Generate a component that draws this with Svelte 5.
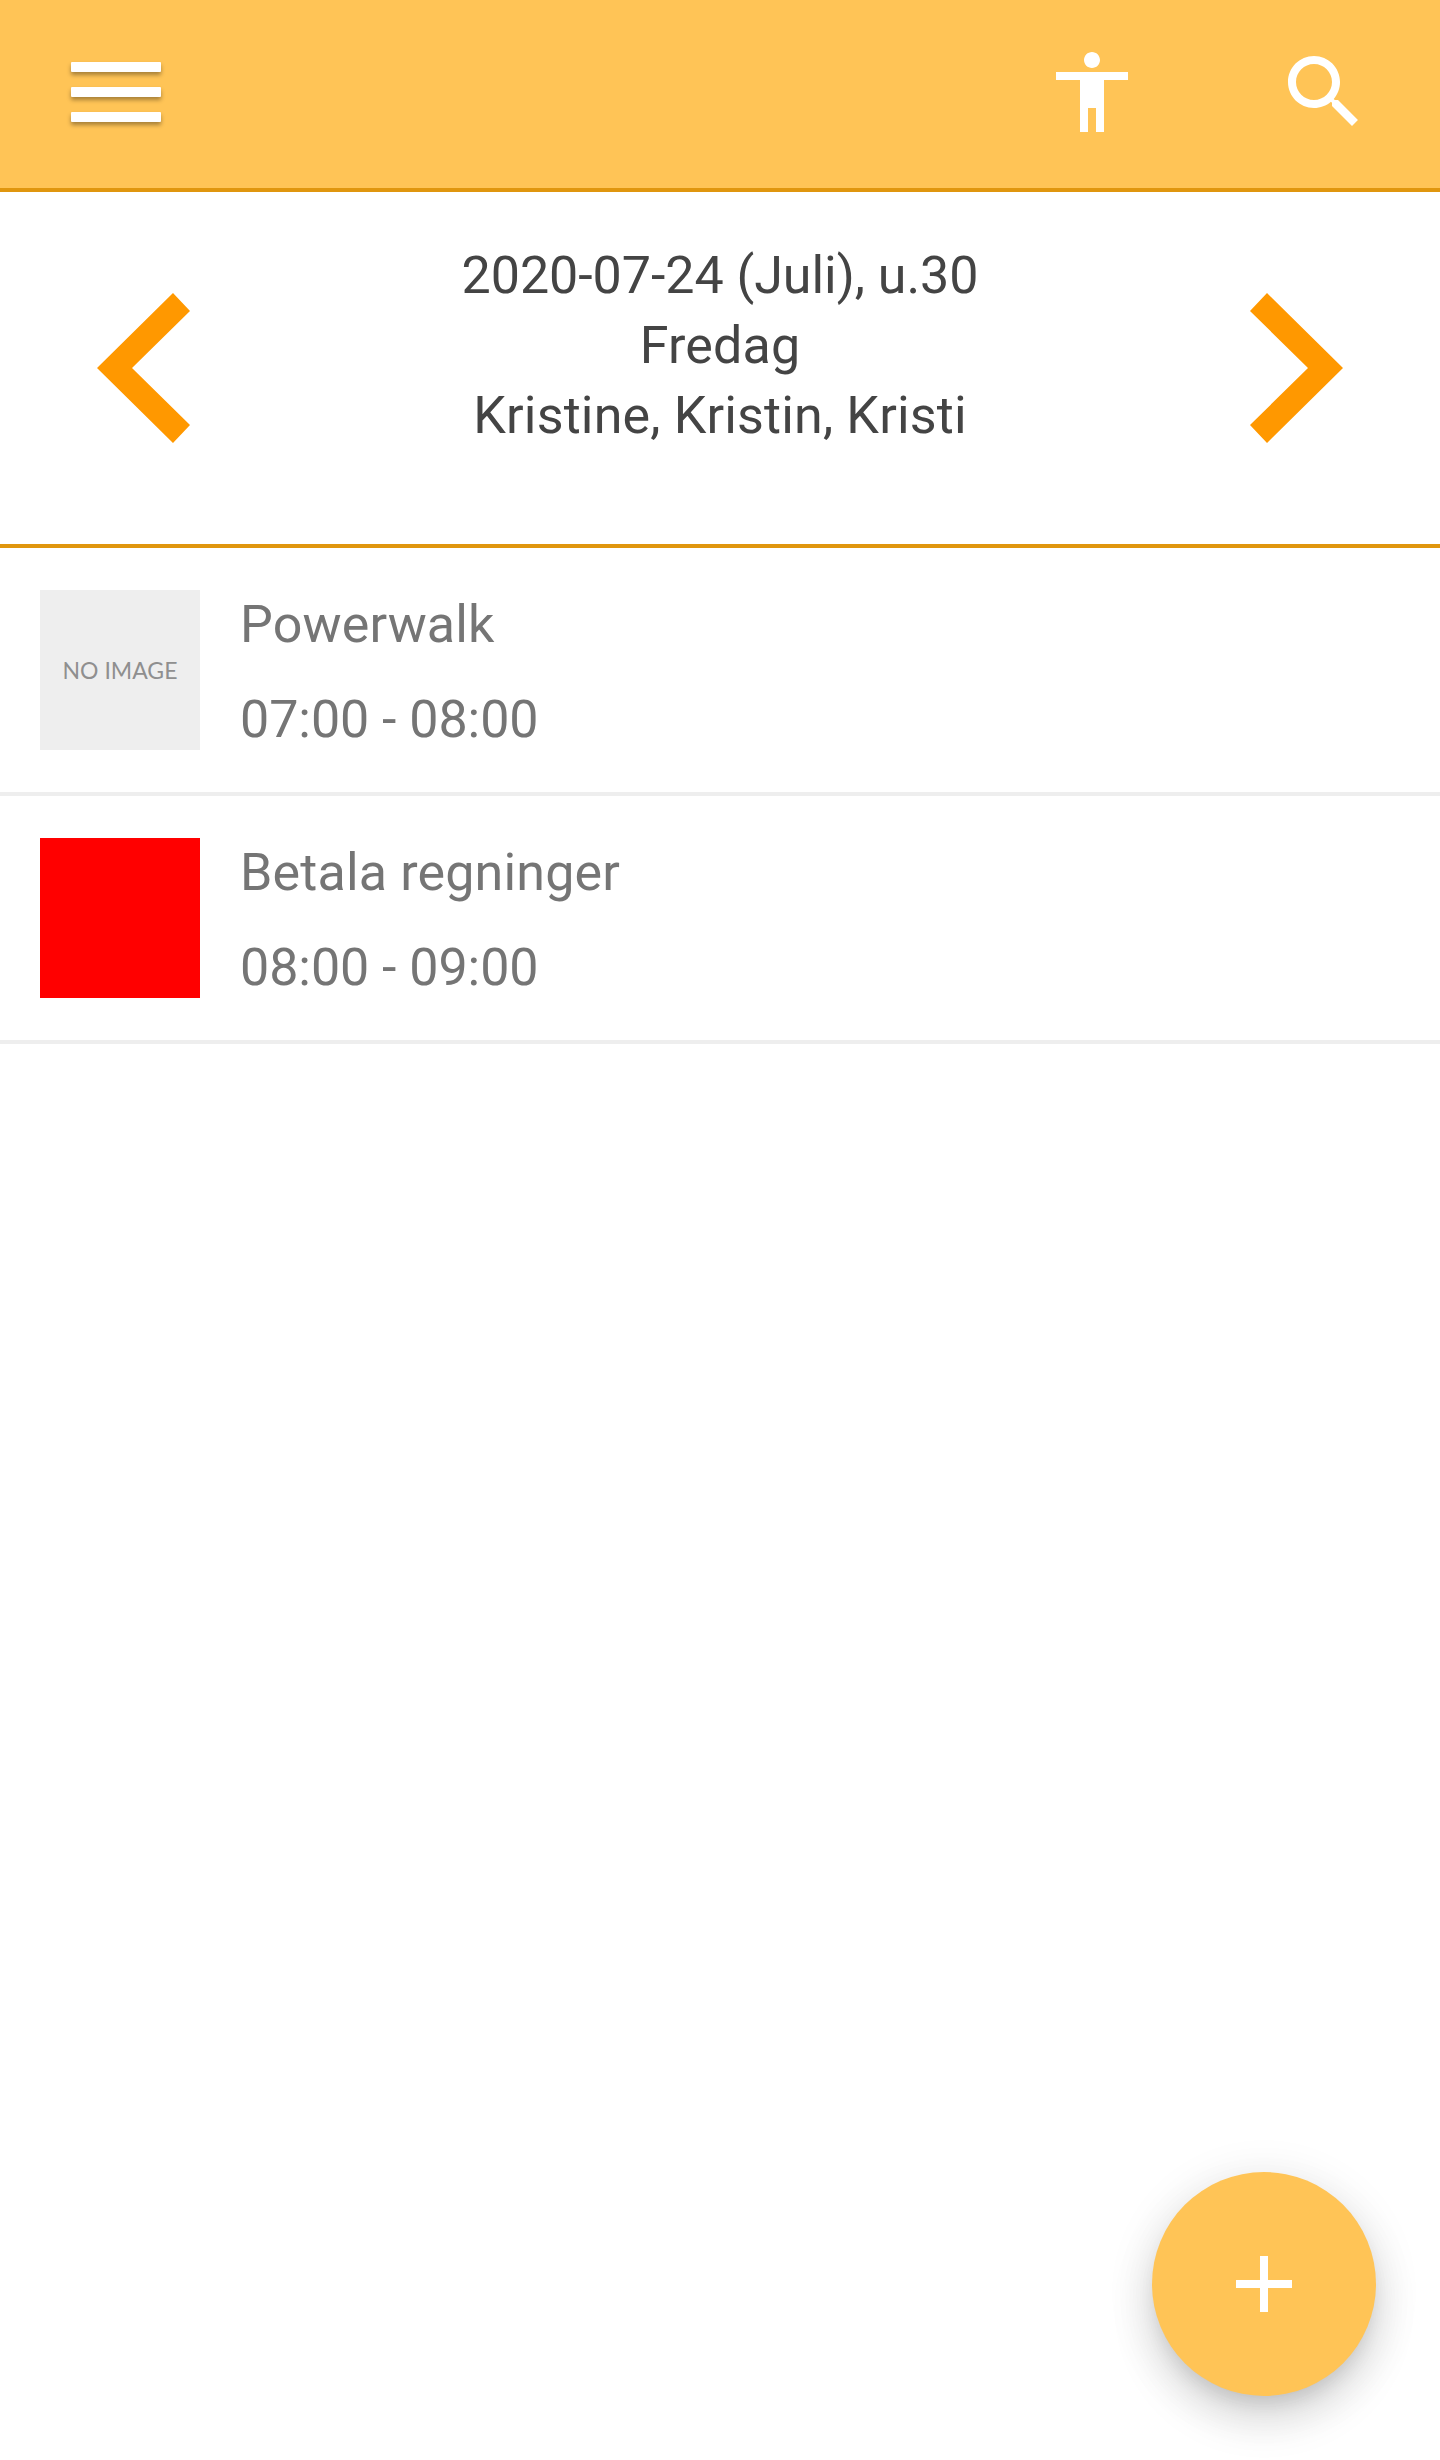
<script lang="ts">
  const events = [
    { title: 'Powerwalk', time: '07:00 - 08:00', color: null },
    { title: 'Betala regninger', time: '08:00 - 09:00', color: '#ff0000' }
  ];
</script>

<div class="page">
  <header class="topbar">
    <button class="menu" aria-label="Meny">
      <span></span>
      <span></span>
      <span></span>
    </button>
    <div class="actions">
      <svg class="icon" viewBox="0 0 24 24" aria-hidden="true">
        <path d="M12 2c1.1 0 2 .9 2 2s-.9 2-2 2-2-.9-2-2 .9-2 2-2zm9 7h-6v13h-2v-6h-2v6H9V9H3V7h18v2z" />
      </svg>
      <svg class="icon" viewBox="0 0 24 24" aria-hidden="true">
        <path d="M15.5 14h-.79l-.28-.27C15.41 12.59 16 11.11 16 9.5 16 5.91 13.09 3 9.5 3S3 5.91 3 9.5 5.91 16 9.5 16c1.61 0 3.09-.59 4.23-1.57l.27.28v.79l5 4.99L20.49 19l-4.99-5zm-6 0C7.01 14 5 11.99 5 9.5S7.01 5 9.5 5 14 7.01 14 9.5 11.99 14 9.5 14z" />
      </svg>
    </div>
  </header>

  <section class="day">
    <svg class="chevron" viewBox="0 0 93 150" aria-hidden="true">
      <path d="M76 0 L93 18 L35 75 L93 132 L76 150 L0 75 Z" />
    </svg>
    <div class="day-text">
      <div class="date">2020-07-24 (Juli), u.30</div>
      <div class="name">Fredag</div>
      <div class="name">Kristine, Kristin, Kristi</div>
    </div>
    <svg class="chevron" viewBox="0 0 93 150" aria-hidden="true">
      <path d="M17 0 L0 18 L58 75 L0 132 L17 150 L93 75 Z" />
    </svg>
  </section>

  <ul class="events">
    {#each events as event}
      <li class="event">
        {#if event.color}
          <div class="thumb" style="background: {event.color}"></div>
        {:else}
          <div class="thumb no-image">NO IMAGE</div>
        {/if}
        <div class="event-text">
          <div class="name">{event.title}</div>
          <div class="date">{event.time}</div>
        </div>
      </li>
    {/each}
  </ul>

  <button class="fab" aria-label="Lägg till">
    <svg class="icon" viewBox="0 0 24 24" aria-hidden="true">
      <path d="M19 13h-6v6h-2v-6H5v-2h6V5h2v6h6v2z" />
    </svg>
  </button>
</div>

<style>
  :global(body) {
    margin: 0;
    background: #fff;
  }
  .page {
    position: relative;
    height: 2460px;
    overflow: hidden;
    font-family: Roboto, 'Liberation Sans', sans-serif;
  }
  .topbar {
    display: flex;
    align-items: center;
    box-sizing: border-box;
    height: 192px;
    padding: 0 68px 4px 71px;
    background: #ffc456;
    border-bottom: 4px solid #e0960e;
  }
  .menu {
    display: flex;
    flex-direction: column;
    gap: 15px;
    width: 90px;
    padding: 0;
    border: 0;
    background: none;
  }
  .menu span {
    display: block;
    height: 10px;
    background: #fff;
    border-radius: 1px;
    box-shadow: 0 3px 4px rgba(0, 0, 0, 0.35);
  }
  .actions {
    display: flex;
    gap: 136px;
    margin-left: auto;
  }
  .icon {
    display: block;
    width: 96px;
    height: 96px;
    fill: #fff;
  }
  .day {
    display: flex;
    align-items: center;
    box-sizing: border-box;
    height: 356px;
    padding: 0 97px;
    border-bottom: 4px solid #e0960e;
  }
  .chevron {
    flex: none;
    width: 93px;
    height: 150px;
    fill: #ff9800;
  }
  .day-text {
    flex: 1;
    align-self: flex-start;
    padding-top: 49px;
    font-size: 52px;
    line-height: 70px;
    text-align: center;
    color: #444;
  }
  .name {
    letter-spacing: 0.16px;
  }
  .date {
    letter-spacing: -0.05px;
  }
  .events {
    margin: 0;
    padding: 0;
    list-style: none;
  }
  .event {
    display: flex;
    gap: 40px;
    box-sizing: border-box;
    height: 248px;
    padding: 42px 40px;
    border-bottom: 4px solid #eee;
  }
  .thumb {
    flex: none;
    width: 160px;
    height: 160px;
  }
  .no-image {
    display: flex;
    align-items: center;
    justify-content: center;
    background: #eee;
    font-family: Lato, sans-serif;
    font-size: 23px;
    color: #8f8f8f;
  }
  .event-text {
    display: flex;
    flex-direction: column;
    gap: 25px;
    font-size: 52px;
    line-height: 70px;
    color: #757575;
  }
  .fab {
    position: absolute;
    right: 64px;
    bottom: 64px;
    display: flex;
    align-items: center;
    justify-content: center;
    width: 224px;
    height: 224px;
    padding: 0;
    border: 0;
    border-radius: 50%;
    background: #ffc456;
    box-shadow:
      0 12px 20px -8px rgba(0, 0, 0, 0.14),
      0 24px 40px 4px rgba(0, 0, 0, 0.1),
      0 8px 44px 8px rgba(0, 0, 0, 0.07);
  }
</style>
